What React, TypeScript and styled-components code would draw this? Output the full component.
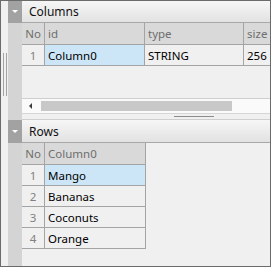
import React from 'react';
import styled, { createGlobalStyle } from 'styled-components';

const GlobalStyle = createGlobalStyle`
  html, body {
    margin: 0;
    padding: 0;
    background: #ffffff;
  }
  * {
    box-sizing: border-box;
  }
`;

const Frame = styled.div`
  width: 271px;
  height: 267px;
  border: 1px solid #6b6b6b;
  background: #f0f0f0;
  display: flex;
  overflow: hidden;
  font-family: 'Segoe UI', 'Noto Sans', sans-serif;
  font-size: 11.5px;
  color: #000;
`;

const SideStrip = styled.div`
  width: 7px;
  background: #f0f0f0;
  display: flex;
  flex-direction: column;
  padding-top: 52px;
`;

const SideGrip = styled.div`
  width: 4px;
  height: 43px;
  margin-left: 2px;
  border-left: 1px solid #a3a3a3;
  border-right: 1px solid #a3a3a3;
`;

const Main = styled.div`
  flex: 1;
  display: grid;
  grid-template-columns: 14px 1fr;
  grid-template-rows: 22px 91px 6px 23px 1fr;
  min-width: 0;
`;

const Gutter = styled.div`
  background: #d4d4d4;
`;

const Toggle = styled.div`
  background: #a2a2a2;
  display: flex;
  align-items: center;
  justify-content: center;
  border-bottom: 1px solid #a2a2a2;
`;

const Arrow = styled.div`
  width: 0;
  height: 0;
  border-left: 3px solid transparent;
  border-right: 3px solid transparent;
  border-top: 3px solid #ffffff;
`;

const SectionTitle = styled.div`
  background: linear-gradient(#f6f6f6, #e2e2e2);
  border-bottom: 1px solid #a8a8a8;
  display: flex;
  align-items: center;
  padding-left: 7px;
  color: #111;
  font-size: 12px;
`;

const Body = styled.div`
  display: flex;
  flex-direction: column;
  min-width: 0;
  overflow: hidden;
`;

const Table = styled.div<{ $cols: string }>`
  display: grid;
  grid-template-columns: ${p => p.$cols};
`;

const HeadCell = styled.div<{ $center?: boolean }>`
  height: 22px;
  background: #d9d9d9;
  color: #6e6e6e;
  border-right: 1px solid #a4a4a4;
  border-bottom: 1px solid #a4a4a4;
  display: flex;
  align-items: center;
  justify-content: ${p => (p.$center ? 'center' : 'flex-start')};
  padding-left: ${p => (p.$center ? '0' : '3px')};
  white-space: nowrap;
  overflow: hidden;
`;

const Cell = styled.div<{ $num?: boolean; $selected?: boolean }>`
  height: 21px;
  background: ${p => (p.$selected ? '#cde6f7' : '#f0f0f0')};
  color: ${p => (p.$num ? '#808080' : '#000')};
  border-right: 1px solid #a4a4a4;
  border-bottom: 1px solid #a4a4a4;
  display: flex;
  align-items: center;
  justify-content: ${p => (p.$num ? 'center' : 'flex-start')};
  padding-left: ${p => (p.$num ? '0' : '3px')};
  white-space: nowrap;
  overflow: hidden;
`;

const Spacer = styled.div`
  flex: 1;
`;

const ScrollBar = styled.div`
  height: 16px;
  background: #fafafa;
  border-top: 1px solid #cfcfcf;
  border-bottom: 1px solid #d6d6d6;
  display: flex;
  align-items: center;
  padding-left: 7px;
`;

const ScrollArrow = styled.div`
  width: 0;
  height: 0;
  border-top: 3px solid transparent;
  border-bottom: 3px solid transparent;
  border-right: 3px solid #3a3a3a;
  margin-right: 9px;
`;

const Thumb = styled.div`
  width: 191px;
  height: 10px;
  background: #c8c8c8;
`;

const Splitter = styled.div`
  background: #f0f0f0;
  border-bottom: 1px solid #cfcfcf;
  display: flex;
  align-items: center;
  padding-left: 152px;
`;

const SplitGrip = styled.div`
  width: 40px;
  height: 1px;
  background: #8c8c8c;
`;

const columnsData = [{ id: 'Column0', type: 'STRING', size: '256' }];
const rowsData = ['Mango', 'Bananas', 'Coconuts', 'Orange'];

const App: React.FC = () => {
  return (
    <>
      <GlobalStyle />
      <Frame>
        <SideStrip>
          <SideGrip />
        </SideStrip>
        <Main>
          <Toggle>
            <Arrow />
          </Toggle>
          <SectionTitle>Columns</SectionTitle>

          <Gutter />
          <Body>
            <Table $cols="23px 100px 99px 40px">
              <HeadCell $center>No</HeadCell>
              <HeadCell>id</HeadCell>
              <HeadCell>type</HeadCell>
              <HeadCell>size</HeadCell>
              {columnsData.map((c, i) => (
                <React.Fragment key={c.id}>
                  <Cell $num>{i + 1}</Cell>
                  <Cell $selected>{c.id}</Cell>
                  <Cell>{c.type}</Cell>
                  <Cell>{c.size}</Cell>
                </React.Fragment>
              ))}
            </Table>
            <Spacer />
            <ScrollBar>
              <ScrollArrow />
              <Thumb />
            </ScrollBar>
          </Body>

          <Gutter />
          <Splitter>
            <SplitGrip />
          </Splitter>

          <Toggle>
            <Arrow />
          </Toggle>
          <SectionTitle>Rows</SectionTitle>

          <Gutter />
          <Body>
            <Table $cols="23px 101px">
              <HeadCell $center>No</HeadCell>
              <HeadCell>Column0</HeadCell>
              {rowsData.map((r, i) => (
                <React.Fragment key={r}>
                  <Cell $num>{i + 1}</Cell>
                  <Cell $selected={i === 0}>{r}</Cell>
                </React.Fragment>
              ))}
            </Table>
          </Body>
        </Main>
      </Frame>
    </>
  );
};

export default App;
